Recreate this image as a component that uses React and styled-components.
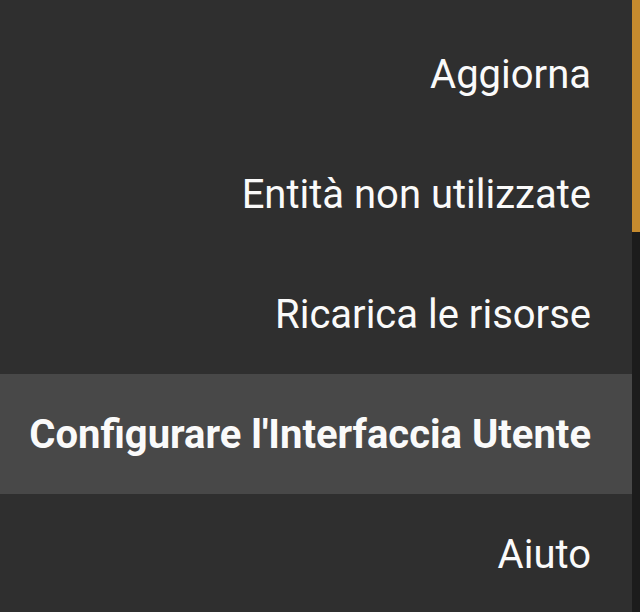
import styled, { createGlobalStyle } from "styled-components";

const GlobalStyle = createGlobalStyle`
  html, body {
    margin: 0;
    padding: 0;
    background: #1c1c1c;
    font-family: Roboto, "Noto Sans", sans-serif;
  }
`;

const Screen = styled.div`
  display: flex;
  width: 640px;
  height: 612px;
  overflow: hidden;
`;

const Menu = styled.ul`
  list-style: none;
  margin: 0;
  padding: 14px 0 0;
  width: 632px;
  background: #2f2f2f;
`;

const MenuItem = styled.li`
  display: flex;
  align-items: center;
  justify-content: flex-end;
  height: 120px;
  padding-right: 41px;
  font-size: 40px;
  font-weight: ${(props) => (props.$active ? 700 : 400)};
  color: #fafafa;
  background: ${(props) => (props.$active ? "#484848" : "transparent")};
`;

const Edge = styled.div`
  flex: 1;
  display: flex;
  flex-direction: column;
`;

const EdgeTop = styled.div`
  height: 232px;
  background: #c58a2e;
`;

const EdgeRest = styled.div`
  flex: 1;
  background: #1c1c1c;
`;

const items = [
  "Aggiorna",
  "Entità non utilizzate",
  "Ricarica le risorse",
  "Configurare l'Interfaccia Utente",
  "Aiuto",
];

export default function App() {
  return (
    <Screen>
      <GlobalStyle />
      <Menu>
        {items.map((label, i) => (
          <MenuItem key={label} $active={i === 3}>
            {label}
          </MenuItem>
        ))}
      </Menu>
      <Edge>
        <EdgeTop />
        <EdgeRest />
      </Edge>
    </Screen>
  );
}
